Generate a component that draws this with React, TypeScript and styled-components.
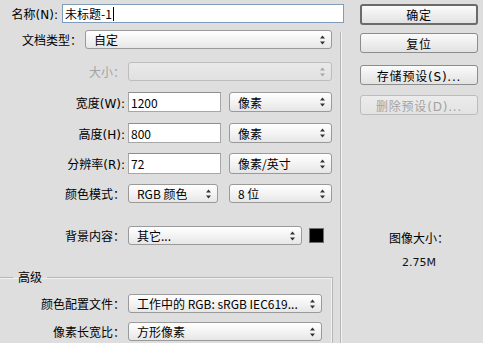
import React from 'react'
import styled, { createGlobalStyle } from 'styled-components'

const GlobalStyle = createGlobalStyle`
  html, body {
    margin: 0;
    padding: 0;
    background: #dedede;
  }
  body {
    font-family: "Noto Sans CJK SC", "DejaVu Sans", sans-serif;
    font-size: 12px;
    color: #000;
  }
`

const Dialog = styled.div`
  display: flex;
  width: 483px;
  height: 343px;
  overflow: hidden;
  background: #dedede;
`

const FormColumn = styled.div`
  width: 345px;
  display: flex;
  flex-direction: column;
`

const SideColumn = styled.div`
  width: 118px;
  margin-left: 15px;
  padding-top: 4px;
  display: flex;
  flex-direction: column;
`

const Group = styled.div`
  position: relative;
  width: 341px;
  flex: 1;
  &::after {
    content: '';
    position: absolute;
    right: 0;
    top: 9px;
    bottom: 0;
    width: 1px;
    background: #b6b6b6;
    box-shadow: 1px 0 0 #f2f2f2;
  }
`

const Advanced = styled.fieldset`
  margin: 0;
  padding: 0;
  width: 332px;
  border: none;
  border-top: 1px solid #b6b6b6;
  border-right: 1px solid #b6b6b6;
  box-shadow: inset -1px 1px 0 #f2f2f2;
  margin-top: 24px;
  height: 100px;
`

const Legend = styled.legend`
  margin-left: 13px;
  padding: 0 5px;
  line-height: 16px;
`

const Row = styled.div<{ $mt: number; $h?: number }>`
  display: flex;
  align-items: center;
  margin-top: ${p => p.$mt}px;
  height: ${p => p.$h ?? 20}px;
`

const Label = styled.span<{ $w: number; $gap?: number; $disabled?: boolean }>`
  width: ${p => p.$w}px;
  margin-right: ${p => p.$gap ?? 3}px;
  flex-shrink: 0;
  text-align: right;
  white-space: nowrap;
  font-family: "DejaVu Sans", "Noto Sans CJK SC", sans-serif;
  color: ${p => (p.$disabled ? '#a3a3a3' : '#000')};
`

const TextField = styled.div<{ $w: number; $focus?: boolean }>`
  box-sizing: border-box;
  width: ${p => p.$w}px;
  height: 100%;
  display: flex;
  align-items: center;
  padding-left: 2px;
  background: #fff;
  border: 1px solid ${p => (p.$focus ? '#7f9db9' : '#a7a7a7')};
  border-top-color: ${p => (p.$focus ? '#7f9db9' : '#8e8e8e')};
  white-space: nowrap;
`

const Caret = styled.span`
  display: inline-block;
  width: 1px;
  height: 14px;
  background: #000;
  margin-left: 1px;
`

const SelectBox = styled.div<{ $w: number; $ml?: number; $disabled?: boolean }>`
  box-sizing: border-box;
  width: ${p => p.$w}px;
  margin-left: ${p => p.$ml ?? 0}px;
  height: 100%;
  display: flex;
  align-items: center;
  justify-content: space-between;
  padding: 0 5px 0 8px;
  border: 1px solid ${p => (p.$disabled ? '#bdbdbd' : '#9a9a9a')};
  border-radius: 3px;
  background: ${p =>
    p.$disabled
      ? 'linear-gradient(#e9e9e9, #e1e1e1)'
      : 'linear-gradient(#ffffff, #f1f1f1 60%, #e6e6e6)'};
  white-space: nowrap;
  overflow: hidden;
`

const SelectText = styled.span`
  overflow: hidden;
`

const Swatch = styled.div`
  width: 15px;
  height: 15px;
  margin-left: 7px;
  background: #000;
  border: 1px solid #6e6e6e;
  box-sizing: border-box;
`

const Button = styled.button<{ $mt: number; $primary?: boolean }>`
  box-sizing: border-box;
  width: 118px;
  height: ${p => (p.$primary ? 21 : 20)}px;
  margin-top: ${p => p.$mt}px;
  padding: 0;
  font-family: "DejaVu Sans", "Noto Sans CJK SC", sans-serif;
  font-size: 12px;
  letter-spacing: 0.8px;
  color: #000;
  border: ${p => (p.$primary ? '2px solid #6b6b6b' : '1px solid #8c8c8c')};
  border-radius: 3px;
  background: linear-gradient(#fbfbfb, #ededed 55%, #e2e2e2);
  &:disabled {
    color: #a3a3a3;
    border-color: #bcbcbc;
    background: linear-gradient(#ececec, #e3e3e3);
  }
`

const SizeInfo = styled.div`
  margin-top: 114px;
  display: flex;
  flex-direction: column;
  align-items: center;
  gap: 7px;
  line-height: 18px;
`

const SizeValue = styled.span`
  font-family: "DejaVu Sans", sans-serif;
  font-size: 11px;
  color: #111;
`

const Arrows: React.FC<{ disabled?: boolean }> = ({ disabled }) => (
  <svg width="7" height="10" viewBox="0 0 7 10" style={{ flexShrink: 0 }}>
    <path d="M3.5 0.5 L6 3.5 H1 Z M3.5 9.5 L6 6.5 H1 Z" fill={disabled ? '#a8a8a8' : '#333'} />
  </svg>
)

const Select: React.FC<{ w: number; ml?: number; disabled?: boolean; children?: React.ReactNode }> = ({
  w,
  ml,
  disabled,
  children,
}) => (
  <SelectBox $w={w} $ml={ml} $disabled={disabled}>
    <SelectText>{children}</SelectText>
    <Arrows disabled={disabled} />
  </SelectBox>
)

export default function App() {
  return (
    <>
      <GlobalStyle />
      <Dialog>
        <FormColumn>
          <Row $mt={4} $h={21}>
            <Label $w={58} $gap={4}>名称(N):</Label>
            <TextField $w={282} $focus>
              未标题-1
              <Caret />
            </TextField>
          </Row>
          <Group>
            <Row $mt={7} $h={19}>
              <Label $w={82}>文档类型：</Label>
              <Select w={247}>自定</Select>
            </Row>
            <Row $mt={13} $h={19}>
              <Label $w={125} $disabled>大小：</Label>
              <Select w={204} disabled />
            </Row>
            <Row $mt={11}>
              <Label $w={125}>宽度(W):</Label>
              <TextField $w={93}>1200</TextField>
              <Select w={103} ml={8}>像素</Select>
            </Row>
            <Row $mt={11}>
              <Label $w={125}>高度(H):</Label>
              <TextField $w={93}>800</TextField>
              <Select w={103} ml={8}>像素</Select>
            </Row>
            <Row $mt={10} $h={21}>
              <Label $w={125}>分辨率(R):</Label>
              <TextField $w={93}>72</TextField>
              <Select w={103} ml={8}>像素/英寸</Select>
            </Row>
            <Row $mt={10} $h={19}>
              <Label $w={125}>颜色模式：</Label>
              <Select w={90}>RGB 颜色</Select>
              <Select w={103} ml={11}>8 位</Select>
            </Row>
            <Row $mt={23} $h={19}>
              <Label $w={125}>背景内容：</Label>
              <Select w={174}>其它...</Select>
              <Swatch />
            </Row>
            <Advanced>
              <Legend>高级</Legend>
              <Row $mt={9} $h={19}>
                <Label $w={125}>颜色配置文件：</Label>
                <Select w={194}>工作中的 RGB: sRGB IEC619...</Select>
              </Row>
              <Row $mt={9} $h={19}>
                <Label $w={125}>像素长宽比：</Label>
                <Select w={194}>方形像素</Select>
              </Row>
            </Advanced>
          </Group>
        </FormColumn>
        <SideColumn>
          <Button $mt={0} $primary>确定</Button>
          <Button $mt={8}>复位</Button>
          <Button $mt={12}>存储预设(S)...</Button>
          <Button $mt={10} disabled>删除预设(D)...</Button>
          <SizeInfo>
            <span>图像大小：</span>
            <SizeValue>2.75M</SizeValue>
          </SizeInfo>
        </SideColumn>
      </Dialog>
    </>
  )
}
